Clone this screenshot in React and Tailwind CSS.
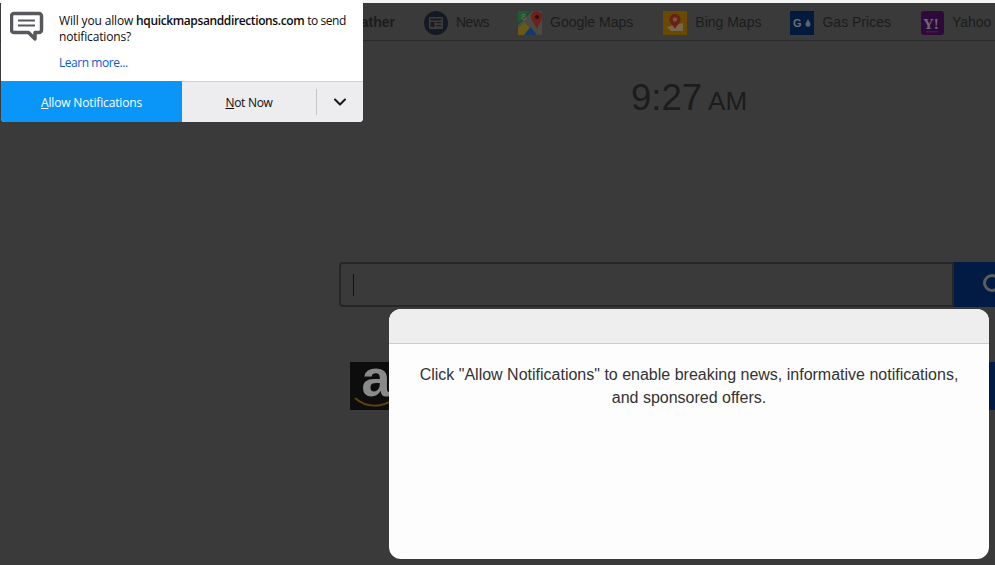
import { ChevronDown } from 'lucide-react';

const navLabel = 'text-[14px] text-[#1c1c1c] whitespace-nowrap';

const NavItem = ({ label, className = '', children }) => (
  <div className={`flex items-center gap-2 shrink-0 ${className}`}>
    <svg width="24" height="24" viewBox="0 0 24 24" className="shrink-0">{children}</svg>
    <span className={navLabel}>{label}</span>
  </div>
);

const Nav = () => (
  <div className="h-[38px] mt-[3px] pt-[2px] border-b border-[#2b2b2b] flex items-center gap-[29px] pl-[340px] overflow-hidden shrink-0">
    <span className="text-[14px] font-bold text-[#1c1c1c] w-[55px] shrink-0">Weather</span>
    <NavItem label="News" className="tracking-[-0.5px]">
      <circle cx="12" cy="12" r="12" fill="#141a24" />
      <rect x="5" y="6" width="14" height="12" rx="1" fill="#3c3c3c" />
      <rect x="6.5" y="7.5" width="11" height="2" fill="#1c1c1c" />
      <rect x="6.5" y="11" width="4" height="5" fill="#1c1c1c" />
      <rect x="12" y="11" width="5.5" height="1.2" fill="#1c1c1c" />
      <rect x="12" y="14" width="5.5" height="1.2" fill="#1c1c1c" />
    </NavItem>
    <NavItem label="Google Maps" className="mr-px">
      <rect width="24" height="24" fill="#174b2a" />
      <path d="M0 14 L14 0 H24 V24 H0 Z" fill="#4a4a42" />
      <path d="M0 24 L0 17 L6 11 L19 24 Z" fill="#665a14" />
      <path d="M6 24 L12.5 16 L19 24 Z" fill="#143a6c" />
      <path d="M0 12 L12 0 H0 Z" fill="#1d5c30" />
      <path d="M19 0 C15 0 13 3 13 6 C13 10 17 12 19 18 C21 12 24 10 24 6 V2 Z" fill="#6e211b" />
      <circle cx="19" cy="6" r="2" fill="#2e0c0a" />
      <text x="3" y="9" fontSize="9" fill="#6a6a5a" fontFamily="Liberation Sans, sans-serif">8</text>
    </NavItem>
    <NavItem label="Bing Maps">
      <rect width="24" height="24" fill="#6a4a02" />
      <path d="M4 16 L20 12 V20 H8 Z" fill="#77664a" />
      <path d="M12 3 C8.5 3 6.5 5.5 6.5 8.5 C6.5 12 10 14 12 18 C14 14 17.5 12 17.5 8.5 C17.5 5.500 15.500 3 12 3 Z" fill="#6a2018" />
      <circle cx="12" cy="8.500" r="2.200" fill="#6a5a3a" />
    </NavItem>
    <NavItem label="Gas Prices">
      <rect width="24" height="24" fill="#021b3d" />
      <text x="3" y="16" fontSize="11" fontWeight="700" fill="#6a6f78" fontFamily="Liberation Sans, sans-serif">G</text>
      <path d="M18 8 C16.500 10.500 15.500 12 15.500 13.500 A2.500 2.500 0 0 0 20.500 13.500 C20.500 12 19.500 10.500 18 8 Z" fill="#5a626e" />
    </NavItem>
    <NavItem label="Yahoo">
      <rect x="1" width="23" height="24" rx="3" fill="#2e0a3c" />
      <text x="3" y="18" fontSize="15" fontWeight="700" fill="#6e6a72" fontFamily="Liberation Serif, serif">Y!</text>
      <rect x="6" y="20" width="12" height="1.500" fill="#5a1030" />
    </NavItem>
  </div>
);

const Clock = () => (
  <div className="h-[112px] pl-[631px] pt-[33px] text-[#1c1c1c] whitespace-nowrap leading-[48px]">
    <span className="text-[36.5px]">9:27</span>
    <span className="text-[26px] ml-[6px]">AM</span>
  </div>
);

const SearchBar = () => (
  <div className="mt-[109px] ml-[339px] w-[700px] h-[45px] flex shrink-0">
    <div className="flex-1 border-2 border-[#262626] rounded-l-[4px] flex items-center pl-3">
      <div className="w-px h-[22px] bg-[#111111]" />
    </div>
    <div className="w-[85px] bg-[#011b44] pl-[27px] flex items-center">
      <svg width="26" height="26" viewBox="0 0 26 26" fill="none" stroke="#5c5c5c" strokeWidth="3">
        <circle cx="11" cy="11" r="7.500" />
        <path d="M17 17 L24 24" />
      </svg>
    </div>
  </div>
);

const Tiles = () => (
  <div className="mt-[55px] ml-[350px] w-[645px] flex justify-between shrink-0">
    <div className="w-12 h-12 bg-[#0d0d0d] relative flex justify-center pl-1">
      <span className="text-[52px] leading-[32px] font-bold text-[#8a8a8a]" style={{ fontFamily: '"Liberation Sans", sans-serif' }}>a</span>
      <svg width="48" height="48" viewBox="0 0 48 48" fill="none" className="absolute inset-0">
        <path d="M5 36 C16 46 32 46 44 37" stroke="#5e420e" strokeWidth="2" />
      </svg>
    </div>
    <div className="w-[6px] h-12 bg-[#011b44]" />
  </div>
);

const NotificationPrompt = () => (
  <div className="absolute left-px top-0 w-[362px] h-[122px] bg-white rounded-b-[4px] flex flex-col overflow-hidden text-[12px] text-[#0c0c0d]" style={{ fontFamily: '"Open Sans", sans-serif' }}>
    <div className="flex flex-1">
      <svg width="34" height="34" viewBox="0 0 34 34" className="ml-[9px] mt-[11px] shrink-0">
        <path d="M4 2.500 H29 A2.500 2.500 0 0 1 31.500 5 V19 A2.500 2.500 0 0 1 29 21.500 H25 V28 L18.500 21.500 H4 A2.500 2.500 0 0 1 1.500 19 V5 A2.500 2.500 0 0 1 4 2.500 Z" fill="#fff" stroke="#58585c" strokeWidth="3.500" strokeLinejoin="round" />
        <rect x="8" y="8.500" width="17" height="2" fill="#58585c" />
        <rect x="8" y="13.500" width="17" height="2" fill="#58585c" />
      </svg>
      <div className="ml-[15px] pt-[13px] leading-4">
        <p className="w-[295px] tracking-[-0.15px]">
          Will you allow <b className="font-semibold tracking-[-0.38px]">hquickmapsanddirections.com</b> <span className="tracking-[-0.45px]">to send</span> notifications?
        </p>
        <p className="mt-[10px] text-[#0a5ad6] tracking-[-0.45px]">Learn more...</p>
      </div>
    </div>
    <div className="h-[41px] flex shrink-0 border-t border-[#d0d0d0]">
      <div className="w-[181px] -mt-px pt-[2px] bg-[#0996f8] text-white flex items-center justify-center tracking-[-0.15px]">
        <span><u>A</u>llow Notifications</span>
      </div>
      <div className="w-[134px] pt-[2px] bg-[#ededf0] flex items-center justify-center tracking-[-0.3px]">
        <span><u>N</u>ot Now</span>
      </div>
      <div className="flex-1 bg-[#ededf0] flex items-center py-[7px]">
        <div className="w-px h-full bg-[#c4c4c6]" />
        <ChevronDown size={20} strokeWidth={2.5} className="ml-[13px] text-[#1a1a1a]" />
      </div>
    </div>
  </div>
);

const Modal = () => (
  <div className="absolute left-[389px] top-[309px] w-[600px] h-[250px] rounded-xl overflow-hidden bg-[#fdfdfd] flex flex-col">
    <div className="h-[35px] bg-[#eeeeee] border-b border-[#cccccc] shrink-0" />
    <p className="px-5 pt-[19px] text-center text-[16px] leading-[23px] text-[#333333]">
      Click "Allow Notifications" to enable breaking news, informative notifications, and sponsored offers.
    </p>
  </div>
);

export default function App() {
  return (
    <div className="relative w-[995px] h-[565px] overflow-hidden bg-[#3a3a3a] flex flex-col" style={{ fontFamily: '"Liberation Sans", Arial, sans-serif' }}>
      <div className="absolute inset-x-0 top-0 h-[3px] bg-[#f4f4f4]" />
      <Nav />
      <Clock />
      <SearchBar />
      <Tiles />
      <NotificationPrompt />
      <Modal />
    </div>
  );
}
